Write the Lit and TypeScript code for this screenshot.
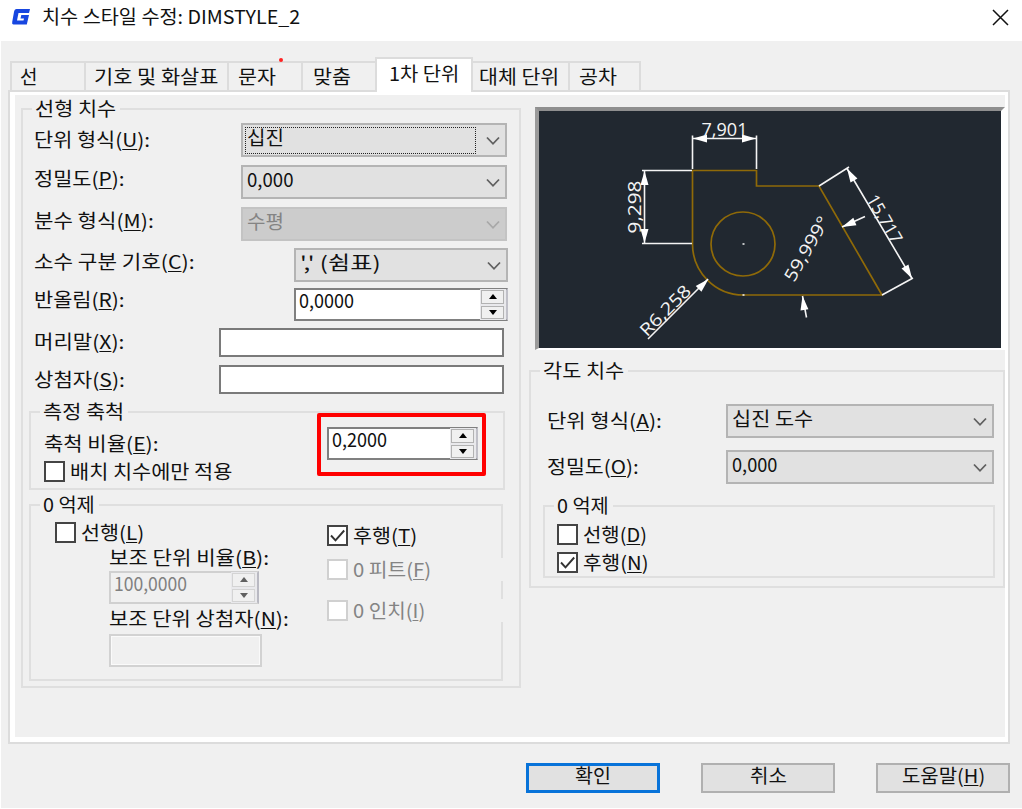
import { LitElement, html, svg, css } from "lit";
import { customElement, property, query } from "lit/decorators.js";

/** One line of text condensed or widened to a given width. `key` is the underlined access letter. */
@customElement("fit-text")
class FitText extends LitElement {
  @property() text = "";
  @property() key = "";
  @property() tail = "";
  @property({ type: Number }) width = 0;
  @query(".run") run!: HTMLElement;

  static styles = css`
    :host { display: block; height: 20px; flex: none; line-height: 18px; white-space: pre; }
    .run { display: inline-block; transform-origin: 0 50%; vertical-align: top; }
    u { text-decoration-thickness: 1px; text-underline-offset: 2px; text-decoration-skip-ink: none; }
  `;

  updated() {
    this.style.width = `${this.width}px`;
    const natural = this.run.offsetWidth;
    if (natural) this.run.style.transform = `scaleX(${this.width / natural})`;
  }

  render() {
    return html`<span class="run">${this.text}${this.key ? html`(<u>${this.key}</u>)` : ""}${this.tail}</span>`;
  }
}

const label = (text: string, width: number, key = "", tail = "") =>
  html`<fit-text text=${text} width=${width} key=${key} tail=${tail}></fit-text>`;

@customElement("combo-box")
class ComboBox extends LitElement {
  @property() value = "";
  @property({ type: Number }) textWidth = 40;
  @property({ type: Boolean, reflect: true }) disabled = false;
  @property({ type: Boolean, reflect: true }) focused = false;

  static styles = css`
    :host { display: flex; align-items: center; justify-content: space-between; box-sizing: border-box; height: 34px;
      border: 2px solid #b4b4b4; background: #e1e1e1; padding: 0 5px 0 2px; }
    :host([disabled]) { background: #ccc; border-color: #c3c3c3; color: #848484; }
    .value { display: flex; flex: 1; align-items: center; height: 27px; box-sizing: border-box; padding: 0 0 4px 1px; margin-right: 10px;
      border: 1px solid transparent; }
    :host([focused]) .value { border: 1px dotted #222; }
    svg { flex: none; width: 14px; height: 10px; margin-top: 2px; fill: none; stroke: #606060; stroke-width: 1.8; }
    :host([disabled]) svg { stroke: #a8a8a8; }
  `;

  render() {
    return html`<div class="value">${label(this.value, this.textWidth)}</div>
      <svg viewBox="0 0 14 10"><path d="M1 1.5 7 7.8 13 1.5" /></svg>`;
  }
}

@customElement("spin-box")
class SpinBox extends LitElement {
  @property() value = "";
  @property({ type: Number }) textWidth = 54;
  @property({ type: Boolean, reflect: true }) disabled = false;

  static styles = css`
    :host { display: flex; box-sizing: border-box; height: 33px; border: 2px solid #808080; border-right-color: #c0c0c8;
      background: #fff; }
    :host([disabled]) { background: #f0f0f0; border-color: #d0d0d0; border-right-color: #b9b9c2; color: #808080; }
    .value { flex: 1; padding: 1px 0 0 3px; }
    .arrows { display: flex; flex-direction: column; gap: 2px; width: 26px; margin: -1px 0; padding: 1px 2px 1px 1px; background: #e9e9ec;
      box-sizing: border-box; }
    .arrow { flex: 1; display: flex; align-items: center; justify-content: center; background: #f0f0f0;
      border: 1px solid #b2b2b2; }
    :host([disabled]) .arrow { border-color: #d4d4d4; }
    svg { width: 8px; height: 5px; fill: #000; }
    :host([disabled]) svg { fill: #606060; }
  `;

  render() {
    return html`<div class="value">${label(this.value, this.textWidth)}</div>
      <div class="arrows">
        <div class="arrow"><svg viewBox="0 0 8 5"><path d="M0 5 4 0 8 5Z" /></svg></div>
        <div class="arrow"><svg viewBox="0 0 8 5"><path d="M0 0 4 5 8 0Z" /></svg></div>
      </div>`;
  }
}

@customElement("check-box")
class CheckBox extends LitElement {
  @property({ type: Boolean }) checked = false;
  @property({ type: Boolean, reflect: true }) disabled = false;

  static styles = css`
    :host { display: flex; align-items: center; gap: 5px; height: 21px; }
    .box { box-sizing: border-box; width: 21px; height: 21px; border: 2px solid #444; background: #fff; flex: none; }
    svg { display: block; width: 17px; height: 17px; fill: none; stroke: #333; stroke-width: 1.9; }
    :host([disabled]) .box { border-color: #d0d0d0; }
    :host([disabled]) { color: #848484; }
  `;

  render() {
    return html`<div class="box">${this.checked ? html`<svg viewBox="0 0 17 17"><path d="M2 8.5 6.5 13.3 15.2 3.5" /></svg>` : ""}</div>
      <slot></slot>`;
  }
}

@customElement("style-preview")
class StylePreview extends LitElement {
  static styles = css`
    :host { display: block; box-sizing: border-box; width: 470px; height: 243px; background: #212830;
      border-style: solid; border-width: 4px 4px 2px 4px; border-color: #8f8f8f #fff #fff #9a9a9a; }
    svg { display: block; width: 462px; height: 237px; }
    .part { fill: none; stroke: #8f6a08; stroke-width: 1.7; }
    .dim { fill: none; stroke: #f4f4f4; stroke-width: 1.6; }
    .tip { fill: #fff; }
    text { fill: #f4f4f4; font: 400 17.5px "Open Sans", "Noto Sans", sans-serif; }
  `;

  tip(x: number, y: number, angle: number) {
    return svg`<path class="tip" d="M0 0 -14 -4 -14 4Z" transform="translate(${x} ${y}) rotate(${angle})" />`;
  }

  num(text: string, x: number, y: number, angle: number, length: number) {
    return svg`<text transform="translate(${x} ${y}) rotate(${angle})" textLength=${length} lengthAdjust="spacingAndGlyphs">${text}</text>`;
  }

  render() {
    return html`<svg viewBox="539 111 462 237">
      <path class="part" d="M692.500 170.500H756.500V186H819L882 295H743.500A51 51 0 0 1 692.500 244Z" />
      <circle class="part" cx="743" cy="244" r="32" />
      <path class="dim" d="M692.500 169V135.500M756.500 169V135.500M693 138.500H756M692 170.500H642M692 243.500H642M644.500 171V243" />
      <path class="dim" d="M819 186 849 167M882 295 913 278M847 168.500 912 278.500M648 339 708 279M842 227 865 216.500M802.500 296 806.500 317.500" />
      <path class="dim" d="M742.500 244H744.500M742.500 295H744.500" />
      ${this.tip(693, 138.5, 180)} ${this.tip(756, 138.5, 0)} ${this.tip(644.5, 171, -90)} ${this.tip(644.5, 243, 90)}
      ${this.tip(708.5, 279, -45)} ${this.tip(847, 168.5, -120)} ${this.tip(912, 278.5, 60)}
      ${this.tip(842, 227, 157)} ${this.tip(802.5, 296, -98)}
      ${this.num("7,901", 701.5, 135.5, 0, 46)} ${this.num("9,298", 641, 233.5, -90, 53)}
      ${this.num("R6,258", 647, 337.5, -45, 64)} ${this.num("59,999°", 794, 283, -60, 72)}
      ${this.num("15,717", 866, 199, 60, 53)}
    </svg>`;
  }
}

const TABS = [
  { id: "lines", text: "선", width: 17 },
  { id: "symbols", text: "기호 및 화살표", width: 124 },
  { id: "text", text: "문자", width: 38 },
  { id: "fit", text: "맞춤", width: 38 },
  { id: "primary", text: "1차 단위", width: 70 },
  { id: "alternate", text: "대체 단위", width: 80 },
  { id: "tolerance", text: "공차", width: 38 },
];

@customElement("app-root")
class AppRoot extends LitElement {
  static styles = css`
    :host { display: flex; flex-direction: column; box-sizing: border-box; width: 1022px; height: 809px; background: #fff;
      color: #111; font: 19px/20px "Noto Sans CJK KR", sans-serif; overflow: hidden; }
    .title { display: flex; align-items: center; height: 41px; flex: none; box-sizing: border-box; padding: 0 13px 7px 10px; }
    .logo { width: 22px; height: 20px; margin-right: 10px; }
    .close { width: 17px; height: 17px; margin: 0 0 0 auto; fill: none; stroke: #111; stroke-width: 1.5; }
    .body { flex: none; display: flex; flex-direction: column; height: 767px; margin-left: 1px; background: #f0f0f0; }
    .tabs { display: flex; align-items: flex-end; height: 49px; padding-left: 9px; flex: none; }
    .tab { position: relative; box-sizing: border-box; height: 29px; border: 2px solid #dcdcdc; border-bottom: 0; padding: 4px 0 0 8px;
      margin-right: -2px; }
    .lines { width: 76px; }
    .symbols { width: 145px; padding-left: 8px; }
    .text { width: 76px; padding-left: 9px; }
    .fit { width: 76px; padding-left: 10px; }
    .primary { width: 98px; height: 35px; background: #fff; padding: 5px 0 0 12px; z-index: 1; margin-bottom: -2px; }
    .alternate { width: 99px; padding-left: 6px; }
    .tolerance { width: 73px; padding-left: 9px; }
    .mark { position: absolute; right: 18px; top: -5px; width: 4px; height: 4px; border-radius: 50%; background: #f22; }
    .page { flex: none; box-sizing: border-box; width: 1002px; height: 654px; margin-left: 7px; border: 2px solid #dcdcdc; background: #fff;
      padding: 3px 3px 5px 5px; }
    .inner { display: flex; align-items: flex-start; height: 100%; box-sizing: border-box; background: #f0f0f0; padding: 4px 0 0 6px; }
    fieldset { box-sizing: border-box; margin: 0; padding: 0; min-width: 0; border: 2px solid #dfdfdf; }
    legend { margin-left: 9px; padding: 0 4px 0 3px; }
    .linear { width: 500px; height: 589px; }
    .form { display: grid; grid-template-columns: 180px 285px; justify-content: space-between; margin: 4px 11px 0 11px;
      grid-template-rows: 34px 34px 34px 33px 33px 28px 29px; row-gap: 8px; width: 474px; align-items: start; height: 270px; }
    .form > fit-text { margin-top: 7px; }
    .form > .prec { margin-top: 4px; }
    .form > .frac { margin-top: 4px; }
    .form > .sep { margin-top: 3px; }
    .form > .round { margin-top: 0; }
    .form > .prefix { margin-top: 1px; }
    .form > .suffix { margin-top: 3px; }
    .form > combo-box, .form > spin-box, .edit { justify-self: end; }
    .wide { width: 266px; margin-right: 1px; }
    .mid { width: 214px; }
    .form > .mid { margin-top: -1px; }
    .rounding { width: 214px; margin-top: -2px; }
    .edit { box-sizing: border-box; width: 285px; height: 29px; border: 2px solid #7a7a7a; background: #fff; margin-right: 4px; }
    .edit.first { margin-top: -3px; }
    .edit.second { margin-top: -2px; }
    .scale { width: 476px; height: 88px; margin: 9px 0 0 6px; }
    .scale-row { position: relative; display: flex; align-items: center; margin: 5px 0 1px 13px; height: 33px; }
    .scale-row spin-box { width: 151px; margin-left: 168px; }
    .highlight { position: absolute; left: 273px; top: -14px; width: 169px; height: 63px; box-sizing: border-box; border: 4px solid #f00; border-radius: 2px; }
    .scale check-box { margin-left: 13px; }
    .zero { width: 474px; height: 186px; margin: 5px 0 0 6px; }
    .cols { display: flex; }
    .zleft { flex: none; width: 296px; padding: 7px 0 0 24px; box-sizing: border-box; }
    .sub { margin-left: 54px; }
    .zleft fit-text.sub { margin-top: 5px; }
    .zleft spin-box { width: 150px; margin-top: 3px; }
    .off-edit { box-sizing: border-box; width: 153px; height: 33px; margin-top: 5px; border: 2px solid #d2d2d2; box-shadow: inset 0 0 0 1px #fafafa; }
    .zright { flex: none; width: 177px; padding-top: 10px; }
    .cover { background: #f0f0f0; padding: 1px 0; margin: 12px 0 18px; }
    .cover + .cover { margin: 0; }
    .right { margin-left: 8px; padding-top: 8px; }
    style-preview { margin-left: 6px; }
    .angular { width: 476px; height: 227px; margin-top: 11px; }
    .aform { display: grid; grid-template-columns: 179px 268px; grid-template-rows: 34px 35px; row-gap: 12px; margin: 23px 0 0 16px; }
    .aform fit-text { margin-top: 7px; }
    .azero { width: 452px; height: 82px; margin: 11px 0 0 12px; }
    .azero check-box { margin: 8px 0 0 12px; }
    .azero check-box + check-box { margin-top: 7px; }
    .buttons { display: flex; gap: 41px; margin: 19px 0 0 525px; }
    .button { box-sizing: border-box; display: flex; justify-content: center; align-items: flex-start; width: 134px; height: 30px;
      border: 2px solid #b0b0b0; background: #e1e1e1; padding-top: 1px; }
    .default { border: 3px solid #0873d9; padding-top: 0; }
  `;

  render() {
    return html`
      <div class="title">
        <svg class="logo" viewBox="0 0 22 20">
          <path d="M6.500 2H20L19 6H8.500L7 13.500H13.500L14 11.500H10.500L11.300 8H19L16.800 17.500H3.500Q1.700 17.500 2.200 15L4 5Q4.500 2 6.500 2Z" fill="#1746e0" />
        </svg>
        ${label("치수 스타일 수정: DIMSTYLE_2", 258)}
        <svg class="close" viewBox="0 0 17 17"><path d="M1 1 16 16M16 1 1 16" /></svg>
      </div>
      <div class="body">
        <div class="tabs">
          ${TABS.map((t) => html`<div class="tab ${t.id}">${label(t.text, t.width)}${t.id === "text" ? html`<i class="mark"></i>` : ""}</div>`)}
        </div>
        <div class="page"><div class="inner">
          <fieldset class="linear">
            <legend>${label("선형 치수", 81)}</legend>
            <div class="form">
              ${label("단위 형식", 116, "U", ":")}
              <combo-box class="wide" value="십진" .textWidth=${37} focused></combo-box>
              <fit-text class="prec" text="정밀도" key="P" tail=":" width="91"></fit-text>
              <combo-box class="wide" value="0,000" .textWidth=${46}></combo-box>
              <fit-text class="frac" text="분수 형식" key="M" tail=":" width="120"></fit-text>
              <combo-box class="wide" value="수평" .textWidth=${37} disabled></combo-box>
              <fit-text class="sep" text="소수 구분 기호" key="C" tail=":" width="161"></fit-text>
              <combo-box class="mid" value="',' (쉼표)" .textWidth=${80}></combo-box>
              <fit-text class="round" text="반올림" key="R" tail=":" width="91"></fit-text>
              <spin-box class="rounding" value="0,0000" .textWidth=${55}></spin-box>
              <fit-text class="prefix" text="머리말" key="X" tail=":" width="91"></fit-text>
              <div class="edit first"></div>
              <fit-text class="suffix" text="상첨자" key="S" tail=":" width="91"></fit-text>
              <div class="edit second"></div>
            </div>
            <fieldset class="scale">
              <legend>${label("측정 축척", 81)}</legend>
              <div class="scale-row">
                ${label("축척 비율", 115, "E", ":")}
                <spin-box value="0,2000" .textWidth=${55}></spin-box>
                <div class="highlight"></div>
              </div>
              <check-box>${label("배치 치수에만 적용", 162)}</check-box>
            </fieldset>
            <fieldset class="zero">
              <legend>${label("0 억제", 52)}</legend>
              <div class="cols">
                <div class="zleft">
                  <check-box>${label("선행", 63, "L")}</check-box>
                  <fit-text class="sub" text="보조 단위 비율" key="B" tail=":" width="160"></fit-text>
                  <spin-box class="sub" value="100,0000" .textWidth=${73} disabled></spin-box>
                  <fit-text class="sub" text="보조 단위 상첨자" key="N" tail=":" width="180"></fit-text>
                  <div class="off-edit sub"></div>
                </div>
                <div class="zright">
                  <check-box checked>${label("후행", 64, "T")}</check-box>
                  <div class="cover"><check-box disabled>${label("0 피트", 78, "F")}</check-box></div>
                  <div class="cover"><check-box disabled>${label("0 인치", 72, "I")}</check-box></div>
                </div>
              </div>
            </fieldset>
          </fieldset>
          <div class="right">
            <style-preview></style-preview>
            <fieldset class="angular">
              <legend>${label("각도 치수", 81)}</legend>
              <div class="aform">
                ${label("단위 형식", 115, "A", ":")}
                <combo-box value="십진 도수" .textWidth=${81}></combo-box>
                ${label("정밀도", 92, "O", ":")}
                <combo-box value="0,000" .textWidth=${45}></combo-box>
              </div>
              <fieldset class="azero">
                <legend>${label("0 억제", 52)}</legend>
                <check-box>${label("선행", 64, "D")}</check-box>
                <check-box checked>${label("후행", 66, "N")}</check-box>
              </fieldset>
            </fieldset>
          </div>
        </div></div>
        <div class="buttons">
          <div class="button default">${label("확인", 36)}</div>
          <div class="button">${label("취소", 37)}</div>
          <div class="button">${label("도움말", 83, "H")}</div>
        </div>
      </div>`;
  }
}
